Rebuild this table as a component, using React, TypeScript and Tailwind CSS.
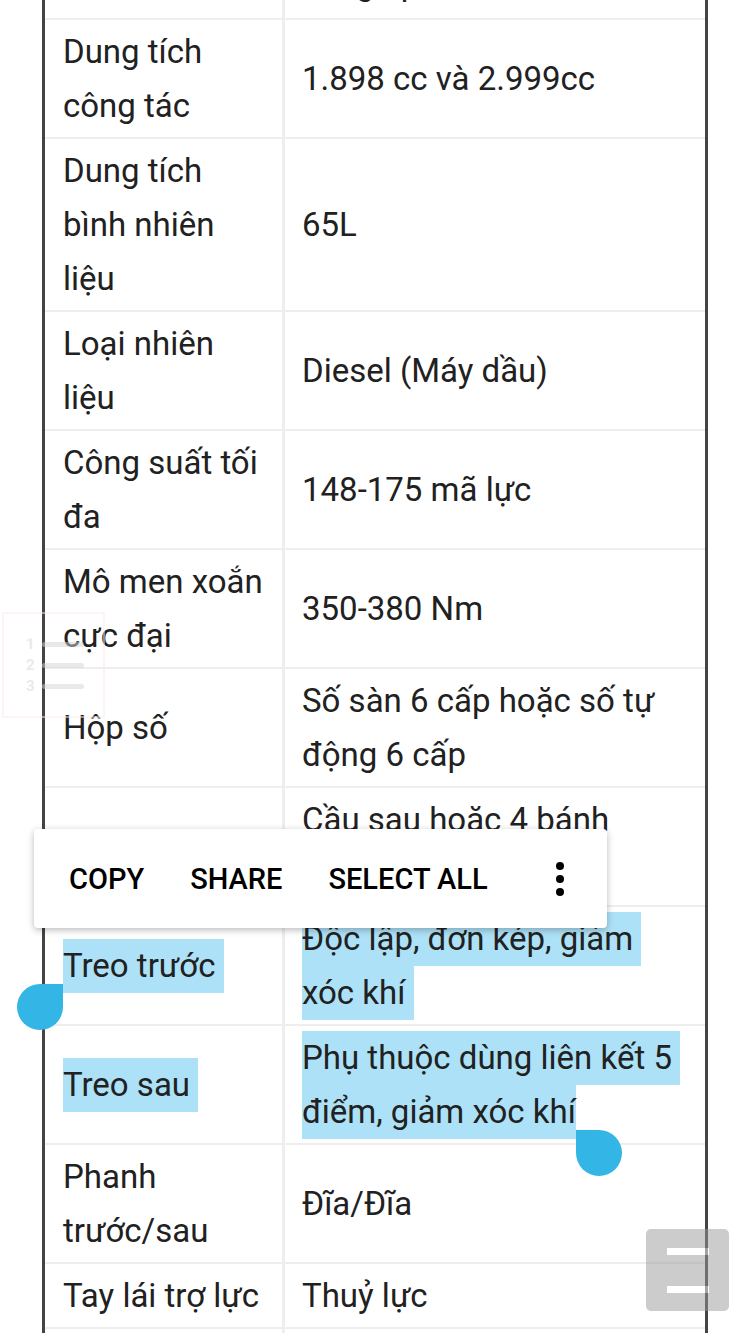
import React from 'react';

interface SpecRow {
  label: string[];
  value: string[];
  selected?: boolean;
}

const rows: SpecRow[] = [
  { label: ['Động cơ'], value: ['Diesel', 'Tăng áp'] },
  { label: ['Dung tích', 'công tác'], value: ['1.898 cc và 2.999cc'] },
  { label: ['Dung tích', 'bình nhiên', 'liệu'], value: ['65L'] },
  { label: ['Loại nhiên', 'liệu'], value: ['Diesel (Máy dầu)'] },
  { label: ['Công suất tối', 'đa'], value: ['148-175 mã lực'] },
  { label: ['Mô men xoắn', 'cực đại'], value: ['350-380 Nm'] },
  { label: ['Hộp số'], value: ['Số sàn 6 cấp hoặc số tự', 'động 6 cấp'] },
  { label: ['Hệ dẫn động'], value: ['Cầu sau hoặc 4 bánh', 'chủ động'] },
  { label: ['Treo trước'], value: ['Độc lập, đơn kép, giảm', 'xóc khí'], selected: true },
  { label: ['Treo sau'], value: ['Phụ thuộc dùng liên kết 5', 'điểm, giảm xóc khí'], selected: true },
  { label: ['Phanh', 'trước/sau'], value: ['Đĩa/Đĩa'] },
  { label: ['Tay lái trợ lực'], value: ['Thuỷ lực'] },
  { label: ['Kích thước', 'tổng thể'], value: ['5.265 x 1.902 x 1.815', 'mm'] },
];

const Lines: React.FC<{ lines: string[]; selected?: boolean; last?: boolean }> = ({ lines, selected, last }) => (
  <div className="flex flex-col">
    {lines.map((line, i) =>
      selected ? (
        <span key={i} className="block w-fit whitespace-pre bg-[#ade1f7]">
          {/* the last selected line ends where the handle sits, no trailing space */}
          {last && i === lines.length - 1 ? line : line + ' '}
        </span>
      ) : (
        <span key={i} className="block">{line}</span>
      )
    )}
  </div>
);

const TableRow: React.FC<{ row: SpecRow; lastSelected: boolean; first: boolean }> = ({ row, lastSelected, first }) => {
  const pad = first ? 'pt-[5px] pb-[7px]' : 'pt-[5px] pb-[4px]';
  return (
    <div className="grid grid-cols-[240px_1fr] border-b-2 border-[#eeeeee]">
      <div className={`flex items-center border-r-[3px] border-[#eeeeee] pl-[18px] pr-2 ${pad}`}>
        <Lines lines={row.label} selected={row.selected} />
      </div>
      <div className={`flex items-center pl-[17px] pr-2 ${pad}`}>
        <Lines lines={row.value} selected={row.selected} last={lastSelected} />
      </div>
    </div>
  );
};

const ListIcon: React.FC = () => (
  <div className="absolute left-[2px] top-[612px] h-[106px] w-[103px] border-2 border-[#fcecec] opacity-50">
    <div className="flex h-full flex-col justify-center gap-[6px] pl-[22px]">
      {['1', '2', '3'].map(n => (
        <div key={n} className="flex items-center gap-[4px]">
          <span className="w-[12px] text-[15px] leading-[15px] font-bold text-[#d6d6d6]">{n}</span>
          <span className="h-[5px] w-[42px] rounded-sm bg-[#d4d4d4]" />
        </div>
      ))}
    </div>
  </div>
);

const SelectionMenu: React.FC = () => (
  <div className="absolute left-[34px] top-[829px] flex h-[99px] w-[573px] items-center rounded-[4px] bg-white pl-[35px] text-[29px] font-medium text-black shadow-[0_2px_7px_rgba(0,0,0,0.28)]">
    <span>COPY</span>
    <span className="ml-[46px]">SHARE</span>
    <span className="ml-[46px]">SELECT ALL</span>
    <div className="ml-[68px] flex flex-col gap-[5px]">
      <span className="h-[8px] w-[8px] rounded-full bg-black" />
      <span className="h-[8px] w-[8px] rounded-full bg-black" />
      <span className="h-[8px] w-[8px] rounded-full bg-black" />
    </div>
  </div>
);

export default function App() {
  const lastSelectedIndex = rows.map(r => !!r.selected).lastIndexOf(true);

  return (
    <div
      className="relative min-h-[1333px] overflow-hidden bg-white text-[33px] leading-[54px] text-[#212121]"
      style={{ fontFamily: 'Roboto, "Noto Sans", sans-serif' }}
    >
      <div className="mx-[42px] -mt-[102px] border-x-[3px] border-[#444444]">
        {rows.map((row, i) => (
          <TableRow key={i} row={row} first={i === 0} lastSelected={i === lastSelectedIndex} />
        ))}
      </div>

      <ListIcon />
      <SelectionMenu />

      {/* selection handles */}
      <div className="absolute left-[17px] top-[984px] h-[46px] w-[46px] rounded-full rounded-tr-none bg-[#33b5e5]" />
      <div className="absolute left-[576px] top-[1130px] h-[46px] w-[46px] rounded-full rounded-tl-none bg-[#33b5e5]" />

      {/* scroll-to-top style floating button */}
      <div className="absolute left-[646px] top-[1229px] flex h-[82px] w-[83px] flex-col items-center justify-center gap-[31px] rounded-[5px] bg-[#9a9a9a] opacity-50">
        <span className="h-[7px] w-[42px] bg-white" />
        <span className="h-[7px] w-[42px] bg-white" />
      </div>
    </div>
  );
}
